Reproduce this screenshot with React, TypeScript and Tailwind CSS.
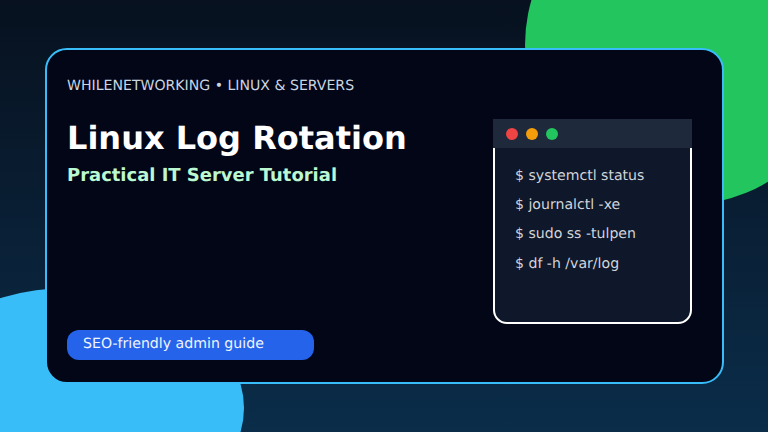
const font = { fontFamily: '"DejaVu Sans", sans-serif' };

const commands = ["$ systemctl status", "$ journalctl -xe", "$ sudo ss -tulpen", "$ df -h /var/log"];

function Terminal() {
  return (
    <div className="flex h-[205px] w-[199px] flex-col rounded-[14px] border-2 border-white bg-[#0f172a]">
      <div className="-mx-0.5 -mt-0.5 flex h-[29px] shrink-0 items-center gap-2 bg-[#1e293b] pl-[13px]">
        <span className="size-3 rounded-full bg-[#ef4444]" />
        <span className="size-3 rounded-full bg-[#f59e0b]" />
        <span className="size-3 rounded-full bg-[#22c55e]" />
      </div>
      <div className="flex flex-col gap-[12.4px] pl-5 pt-[19.6px] text-[14.1px] leading-[17px] text-[#d1d5db]">
        {commands.map((c) => (
          <div key={c}>{c}</div>
        ))}
      </div>
    </div>
  );
}

export default function App() {
  return (
    <div
      style={font}
      className="relative h-[432px] w-[768px] overflow-hidden bg-gradient-to-b from-[#07111f] to-[#0a2d4a] pl-[45px] pt-[48px] [text-rendering:geometricPrecision]"
    >
      <div className="absolute left-[525px] top-[-115px] size-[320px] rounded-full bg-[#22c55e]" />
      <div className="absolute left-[-104px] top-[288px] h-[240px] w-[348px] rounded-[50%] bg-[#38bdf8]" />

      <div className="relative flex h-[336px] w-[679px] justify-between rounded-[22px] border-2 border-[#38bdf8] bg-[#020617] pl-5 pr-[30px] pt-[69px]">
        <div className="flex flex-col">
          <div className="-mt-[41px] text-[14.1px] leading-[17px] text-[#cbd5e1]">WHILENETWORKING • LINUX &amp; SERVERS</div>
          <h1 className="mt-[23px] text-[32px] font-bold leading-[40px] text-white">Linux Log Rotation</h1>
          <div className="mt-[7px] text-[17.97px] font-bold leading-[21px] text-[#bbf7d0]">Practical IT Server Tutorial</div>
          <div className="mt-[144px] flex h-[29.5px] w-[247px] items-center rounded-[12px] bg-[#2563eb] pl-4 text-[14.14px] text-[#eff6ff]">
            SEO-friendly admin guide
          </div>
        </div>
        <Terminal />
      </div>
    </div>
  );
}
